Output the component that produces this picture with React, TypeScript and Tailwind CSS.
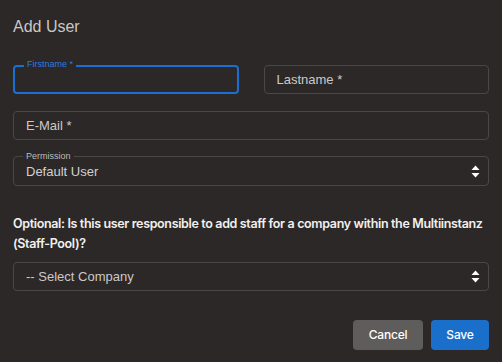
import React from "react";

function Arrows() {
  return (
    <svg width="9" height="13" viewBox="0 0 9 13" className="shrink-0">
      <path d="M4.5 0.5 L8.5 5 L0.5 5 Z" fill="#ffffff" />
      <path d="M4.5 12.5 L8.5 8 L0.5 8 Z" fill="#ffffff" />
    </svg>
  );
}

function Field({ label, focused }: { label: string; focused?: boolean }) {
  if (focused) {
    return (
      <div className="relative h-[29px] rounded-[4px] border-2 border-[#1a6fd2]">
        <span className="absolute -top-[9px] left-[9px] bg-[#2b2827] px-[3px] text-[9px] leading-[12px] text-[#2b7be0]">
          {label}
        </span>
      </div>
    );
  }
  return (
    <div className="flex h-[29px] items-center rounded-[4px] border border-[#4a4745] px-[12px] text-[13px] text-[#cbc9c7]">
      {label}
    </div>
  );
}

export default function App() {
  return (
    <div
      className="h-[362px] w-[502px] bg-[#2b2827] px-[13px] pt-[16px]"
      style={{ fontFamily: "'Liberation Sans', Arial, sans-serif" }}
    >
      <h1 className="text-[16px] leading-[22px] text-[#c9c7c5]">Add User</h1>

      <div className="mt-[27px] grid grid-cols-2 gap-[25px]">
        <Field label="Firstname *" focused />
        <Field label="Lastname *" />
      </div>

      <div className="mt-[17px]">
        <Field label="E-Mail *" />
      </div>

      <div className="relative mt-[16px] flex h-[30px] items-center justify-between rounded-[4px] border border-[#4a4745] pl-[12px] pr-[8px] text-[13px] text-[#d3d1cf]">
        <span className="absolute -top-[7px] left-[9px] bg-[#2b2827] px-[3px] text-[9px] leading-[12px] text-[#bdbbb9]">
          Permission
        </span>
        <span className="pt-[2px]">Default User</span>
        <Arrows />
      </div>

      <p
        className="mt-[28px] text-[12.5px] font-semibold leading-[20px] tracking-[-0.35px] text-[#f2f0ee]"
        style={{ fontFamily: "Inter, 'Liberation Sans', sans-serif" }}
      >
        Optional: Is this user responsible to add staff for a company within the Multiinstanz (Staff-Pool)?
      </p>

      <div className="mt-[8px] flex h-[29px] items-center justify-between rounded-[4px] border border-[#4a4745] pl-[12px] pr-[8px] text-[13px] text-[#cbc9c7]">
        <span>-- Select Company</span>
        <Arrows />
      </div>

      <div
        className="mt-[29px] flex justify-end gap-[8px]"
        style={{ fontFamily: "Inter, 'Liberation Sans', sans-serif" }}
      >
        <button className="h-[30px] w-[70px] rounded-[4px] bg-[#5f5d5b] text-[12px] font-medium tracking-[-0.2px] text-white">
          Cancel
        </button>
        <button className="h-[30px] w-[58px] rounded-[4px] bg-[#1a6fcb] text-[12px] font-medium tracking-[-0.2px] text-white">
          Save
        </button>
      </div>
    </div>
  );
}
